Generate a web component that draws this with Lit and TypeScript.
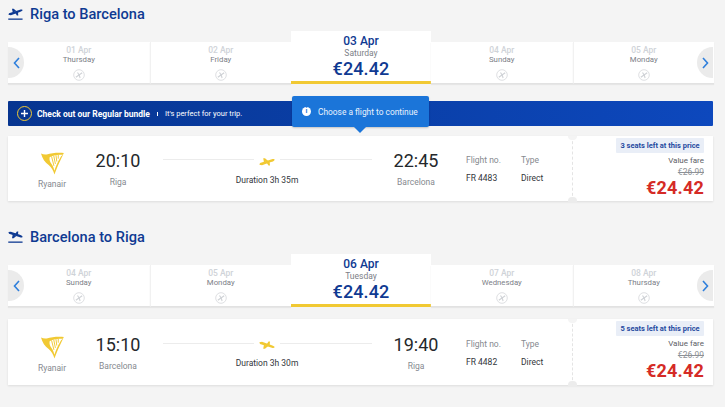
import { LitElement, html, css, svg } from "lit";
import { customElement } from "lit/decorators.js";

const planeUp = svg`<path d="M.4 7.800l.6-1.700L12.800 2.300c1.800-.5 3-.2 2.800.6-.2.8-1.800 1.500-3.600 2.200L3 8.300z" fill="currentColor"/><path d="M5 5.200L4.200 1.200h1.800l3.200 2.800zM7.500 5.400l2 3.100h1.500l-.4-4.100z" fill="currentColor"/>`;

const takeoff = svg`<svg viewBox="0 0 16 14" width="15" height="13"><g transform="translate(0 -.5)">${planeUp}</g><rect x="0.200" y="11.300" width="15.400" height="1.400" fill="currentColor"/></svg>`;
const landing = svg`<svg viewBox="0 0 16 14" width="15" height="13"><g transform="translate(0 9) scale(1 -1)">${planeUp}</g><rect x="0.200" y="11.300" width="15.400" height="1.400" fill="currentColor"/></svg>`;

const harp = svg`<svg viewBox="0 0 24 24" width="23" height="24">
  <path d="M0 2C2 3 4 3.500 6 3 11 1.500 18 .8 24 1.500L22.500 3.500C17 3 12 4 9 6 8.500 9 9.500 11 11 13 12.500 15 13.500 18 14 20 16 14 19 8 21 5L23.500 2.500C21 7 17 16 14 24 13 20 11 16.500 8 14 4 11 1.500 7.500 0 2Z" fill="#f1c933"/>
  <path d="M11 5l2.500 10M13.300 4.300L15 13M15.600 3.800l.9 6.700M18 3.500v4" stroke="#f1c933" stroke-width="1" fill="none"/>
</svg>`;

const noFlight = svg`<svg viewBox="0 0 12 12" width="12" height="12"><circle cx="6" cy="6" r="5.300" fill="#fff" stroke="#d5d7da" stroke-width=".8"/><path d="M2.800 8.300l6.400-4.600M4.500 3.500l1.800 2.800.8 2.700" stroke="#cfd2d6" stroke-width="1.100" fill="none"/></svg>`;

interface Day { date: string; day: string; }
interface Trip {
  title: string; icon: unknown; days: Day[]; sel: Day; banner: boolean;
  dep: string; depCity: string; arr: string; arrCity: string; dur: string; no: string; seats: number;
}

const trips: Trip[] = [
  {
    title: "Riga to Barcelona", icon: takeoff, banner: true,
    days: [{ date: "01 Apr", day: "Thursday" }, { date: "02 Apr", day: "Friday" }, { date: "04 Apr", day: "Sunday" }, { date: "05 Apr", day: "Monday" }],
    sel: { date: "03 Apr", day: "Saturday" },
    dep: "20:10", depCity: "Riga", arr: "22:45", arrCity: "Barcelona", dur: "Duration 3h 35m", no: "FR 4483", seats: 3,
  },
  {
    title: "Barcelona to Riga", icon: landing, banner: false,
    days: [{ date: "04 Apr", day: "Sunday" }, { date: "05 Apr", day: "Monday" }, { date: "07 Apr", day: "Wednesday" }, { date: "08 Apr", day: "Thursday" }],
    sel: { date: "06 Apr", day: "Tuesday" },
    dep: "15:10", depCity: "Barcelona", arr: "19:40", arrCity: "Riga", dur: "Duration 3h 30m", no: "FR 4482", seats: 5,
  },
];

@customElement("app-root")
export class AppRoot extends LitElement {
  static styles = css`
    :host { display: block; width: 725px; height: 407px; overflow: hidden; background: #f4f4f4; font-family: Roboto, "Liberation Sans", sans-serif; color: #2b2f36; padding: 5px 12px 0 8px; box-sizing: border-box; }
    .head { display: flex; align-items: center; gap: 7px; height: 18px; color: #0f3a92; font-size: 14.600px; font-weight: 500; }
    .head svg { display: block; margin-top: 1px; }
    .second { margin-top: 27px; }
    .strip { position: relative; display: flex; align-items: flex-end; margin-top: 8px; height: 53px; }
    .day { flex: 0 0 141.500px; height: 42px; box-sizing: border-box; background: #fff; border-bottom: 1px solid #e2e2e2; display: flex; flex-direction: column; align-items: center; padding-top: 4px; font-size: 7.800px; color: #7c8087; box-shadow: 0 1px 1px #e6e6e6; }
    .day + .day { border-left: 1px solid #f1f1f1; }
    .date { color: #cfd3d8; font-weight: 500; font-size: 8.500px; line-height: 9px; }
    .name { line-height: 9px; }
    .day svg { margin-top: 5px; display: block; }
    .sel { flex: 0 0 140px; height: 53px; box-sizing: border-box; background: #fff; border-bottom: 3px solid #f1c933; display: flex; flex-direction: column; align-items: center; padding-top: 3px; color: #7c8087; }
    .sel .d { color: #0f3a92; font-size: 12px; font-weight: 500; line-height: 14px; }
    .sel .n { font-size: 8.500px; line-height: 10px; }
    .sel .p { color: #0f3a92; font-size: 18px; font-weight: 500; line-height: 22px; letter-spacing: .1px; }
    .nav { position: absolute; bottom: 6px; width: 16px; height: 31px; background: #ebebeb; display: flex; align-items: center; justify-content: center; color: #2f7fdc; }
    .nav.l { left: 0; border-radius: 0 16px 16px 0; }
    .nav.r { right: 0; border-radius: 16px 0 0 16px; }
    .banner { position: relative; margin-top: 17px; height: 25px; border-radius: 1px; background: linear-gradient(90deg, #073590, #0d48bd); color: #fff; display: flex; align-items: center; padding-left: 9px; font-size: 7.500px; box-sizing: border-box; }
    .plus { width: 15px; height: 15px; box-sizing: border-box; border: 1.500px solid #f1c933; border-radius: 50%; display: flex; align-items: center; justify-content: center; margin-right: 5px; }
    .plus svg { display: block; }
    .bold { font-size: 8.500px; font-weight: 700; }
    .sep { width: 1px; height: 4px; background: #fff; margin: 0 7px 0 7px; }
    .tip { position: absolute; left: 284px; top: -5px; width: 137px; height: 31px; background: #1b75d9; border-radius: 2px; display: flex; align-items: center; padding-left: 10px; box-sizing: border-box; font-size: 8.400px; box-shadow: 0 1px 2px rgba(0,0,0,.2); color: #eaf3fd; }
    .tip::after { content: ""; position: absolute; left: 62px; bottom: -6px; border: 6px solid transparent; border-bottom: 0; border-top-color: #1b75d9; }
    .i { width: 9px; height: 9px; border-radius: 50%; background: #fff; color: #1b75d9; font-size: 7px; font-weight: 700; line-height: 9px; text-align: center; margin-right: 7px; }
    .card { position: relative; margin-top: 10px; height: 65px; display: flex; background: #fff; box-shadow: 0 1px 2px #dcdcdc; }
    .second-card { margin-top: 12px; height: 66px; }
    .card::before, .card::after { content: ""; position: absolute; left: 560px; width: 9px; height: 4px; background: #f4f4f4; z-index: 1; }
    .card::before { top: 0; border-radius: 0 0 4px 4px; }
    .card::after { bottom: -1px; height: 5px; background: #ececec; border-radius: 4px 4px 0 0; }
    .main { flex: 0 0 565px; box-sizing: border-box; display: grid; grid-template-columns: 88px 44px 254px 44px 83px 1fr; padding-top: 15px; border-right: 1px dashed #e4e4e4; }
    .second-card .main { padding-top: 16px; }
    .air { display: flex; flex-direction: column; align-items: center; font-size: 8.500px; color: #868a90; width: 88px; }
    .air svg { display: block; margin-bottom: 2px; }
    .air span { margin-top: 2px; }
    .point { display: flex; flex-direction: column; align-items: center; }
    .time { font-size: 18px; line-height: 20px; color: #25282c; }
    .city { font-size: 8.500px; color: #868a90; line-height: 12px; margin-top: 5px; white-space: nowrap; }
    .route { display: flex; flex-direction: column; align-items: center; padding-top: 6px; }
    .line { width: 209px; height: 9px; display: flex; align-items: flex-start; color: #f1c933; gap: 5px; }
    .line i { flex: 1; height: 1px; margin-top: 2px; background: #ececec; }
    .line svg { display: block; }
    .dur { font-size: 8.500px; line-height: 10px; color: #33363b; margin-top: 9px; }
    .second-card .dur { margin-top: 8px; }
    .col { display: flex; flex-direction: column; gap: 7px; padding-top: 4px; font-size: 8.500px; color: #33363b; line-height: 11px; }
    .col.no { padding-left: 28px; }
    .col b { font-weight: 400; color: #868a90; }
    .fare { flex: 1; box-sizing: border-box; padding: 2px 9px 0 0; display: flex; flex-direction: column; align-items: flex-end; }
    .seats { height: 15px; width: 88px; background: #e9eef7; border-radius: 1px; color: #1f4aa0; font-size: 7.500px; font-weight: 700; display: flex; align-items: center; justify-content: center; box-sizing: border-box; }
    .type { font-size: 8px; color: #5c6066; margin-top: 3px; line-height: 10px; }
    .old { font-size: 8.500px; color: #8d9196; text-decoration: line-through; line-height: 10px; margin-top: 1px; }
    .price { font-size: 18px; font-weight: 700; color: #d52b26; line-height: 20px; margin-top: 1px; letter-spacing: .2px; }
  `;

  private day(d: Day) {
    return html`<div class="day"><div class="date">${d.date}</div><div class="name">${d.day}</div>${noFlight}</div>`;
  }

  private trip(t: Trip, i: number) {
    return html`
      <div class="head ${i ? "second" : ""}">${t.icon}<span>${t.title}</span></div>
      <div class="strip">
        ${this.day(t.days[0])}${this.day(t.days[1])}
        <div class="sel"><div class="d">${t.sel.date}</div><div class="n">${t.sel.day}</div><div class="p">€24.42</div></div>
        ${this.day(t.days[2])}${this.day(t.days[3])}
        <div class="nav l"><svg width="7" height="12" viewBox="0 0 7 12"><path d="M6 1L1.500 6 6 11" stroke="currentColor" stroke-width="1.600" fill="none"/></svg></div>
        <div class="nav r"><svg width="7" height="12" viewBox="0 0 7 12"><path d="M1 1l4.500 5L1 11" stroke="currentColor" stroke-width="1.600" fill="none"/></svg></div>
      </div>
      ${t.banner ? html`<div class="banner">
        <div class="plus"><svg width="7" height="7" viewBox="0 0 7 7"><path d="M3.500 0v7M0 3.500h7" stroke="#fff" stroke-width="1.400"/></svg></div>
        <span class="bold">Check out our Regular bundle</span><span class="sep"></span><span>It's perfect for your trip.</span>
        <div class="tip"><span class="i">i</span>Choose a flight to continue</div>
      </div>` : ""}
      <div class="card ${t.banner ? "" : "second-card"}">
        <div class="main">
          <div class="air">${harp}<span>Ryanair</span></div>
          <div class="point"><div class="time">${t.dep}</div><div class="city">${t.depCity}</div></div>
          <div class="route">
            <div class="line"><i></i>${t.banner
              ? svg`<svg width="16" height="9" viewBox="0 0 16 9">${planeUp}</svg>`
              : svg`<svg width="16" height="9" viewBox="0 0 16 9"><g transform="translate(0 9) scale(1 -1)">${planeUp}</g></svg>`}<i></i></div>
            <div class="dur">${t.dur}</div>
          </div>
          <div class="point"><div class="time">${t.arr}</div><div class="city">${t.arrCity}</div></div>
          <div class="col no"><b>Flight no.</b><span>${t.no}</span></div>
          <div class="col"><b>Type</b><span>Direct</span></div>
        </div>
        <div class="fare">
          <div class="seats">${t.seats} seats left at this price</div>
          <div class="type">Value fare</div>
          <div class="old">€26.99</div>
          <div class="price">€24.42</div>
        </div>
      </div>`;
  }

  render() {
    return html`${trips.map((t, i) => this.trip(t, i))}`;
  }
}
